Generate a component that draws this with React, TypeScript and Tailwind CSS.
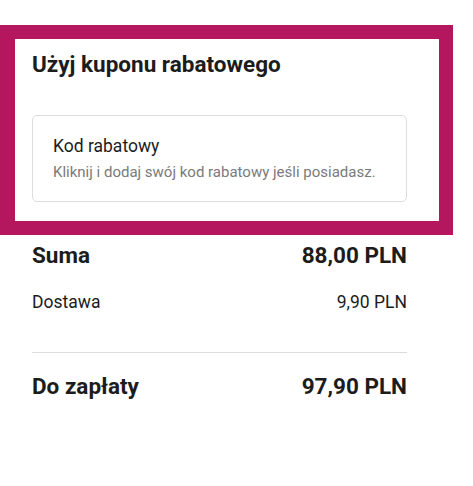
import React from 'react';

export default function App() {
  return (
    <div className="w-[473px] h-[486px] bg-white pt-[25px] text-[#1c1c1c]" style={{ fontFamily: 'Roboto, "Noto Sans", sans-serif' }}>
      <section className="w-[453px] border-[14px] border-l-[15px] border-[#b5175f] pl-[17px] pr-[32px] pt-[11px] pb-[19px]">
        <h2 className="text-[22.5px] leading-[28px] font-bold">Użyj kuponu rabatowego</h2>
        <div className="mt-[37px] border border-[#dddddd] rounded-[5px] pl-[20px] pt-[18px] pb-[19px]">
          <p className="text-[17.5px] leading-[24px]">Kod rabatowy</p>
          <p className="mt-[4px] text-[15px] leading-[20px] text-[#7a7a7a]">Kliknij i dodaj swój kod rabatowy jeśli posiadasz.</p>
        </div>
      </section>

      <div className="w-[375px] ml-[32px] mt-[4px]">
        <div className="flex justify-between text-[22.5px] leading-[32px] font-bold">
          <span>Suma</span>
          <span>88,00 PLN</span>
        </div>
        <div className="flex justify-between mt-[19px] text-[17.5px] leading-[24px]">
          <span>Dostawa</span>
          <span>9,90 PLN</span>
        </div>
        <div className="mt-[38px] h-px bg-[#dcdcdc]" />
        <div className="flex justify-between mt-[17px] text-[22.5px] leading-[32px] font-bold">
          <span>Do zapłaty</span>
          <span>97,90 PLN</span>
        </div>
      </div>
    </div>
  );
}
